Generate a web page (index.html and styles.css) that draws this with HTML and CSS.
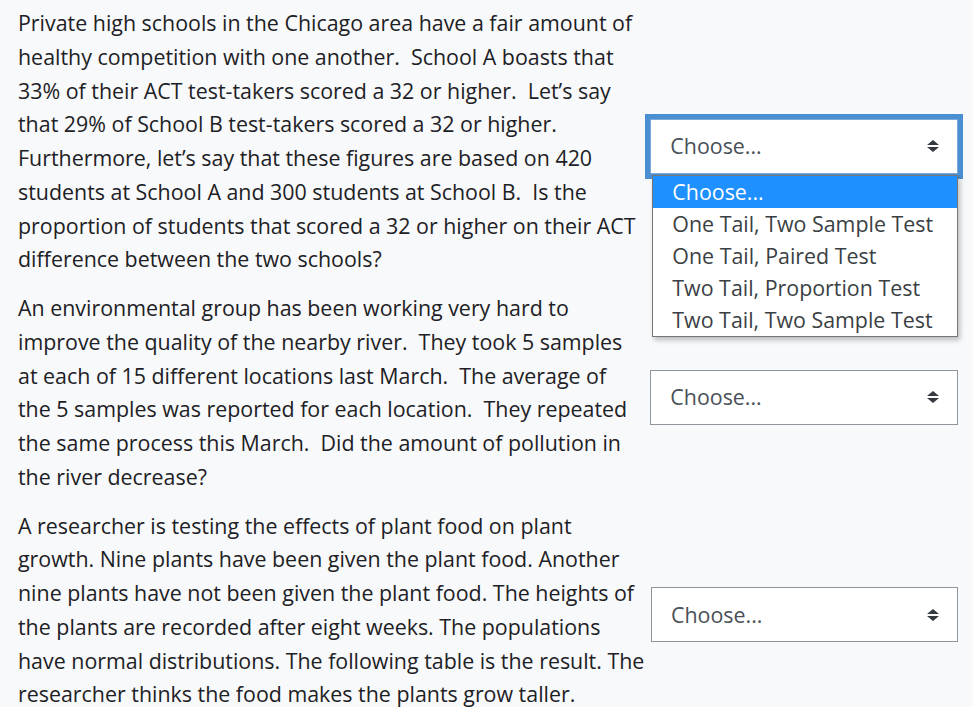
FILE: index.html
```html
<!DOCTYPE html>
<html lang="en">
<head>
<meta charset="utf-8">
<title>Matching question</title>
<link rel="stylesheet" href="styles.css">
</head>
<body>
<div class="content">
  <div class="question">
    <p class="qtext">Private high schools in the Chicago area have a fair amount of<br>healthy competition with one another.&nbsp; School A boasts that<br>33% of their ACT test-takers scored a 32 or higher.&nbsp; Let’s say<br>that 29% of School B test-takers scored a 32 or higher.&nbsp;<br>Furthermore, let’s say that these figures are based on 420<br>students at School A and 300 students at School B.&nbsp; Is the<br>proportion of students that scored a 32 or higher on their ACT<br>difference between the two schools?</p>
    <div class="select-wrap">
      <div class="select focused">
        <span class="select-label">Choose...</span>
        <svg class="arrows" width="12" height="12" viewBox="0 0 12 12"><path d="M0 5 L6 0 L12 5 Z M0 7 L12 7 L6 12 Z" fill="#343a40"/></svg>
      </div>
      <ul class="menu">
        <li class="option active">Choose...</li>
        <li class="option">One Tail, Two Sample Test</li>
        <li class="option">One Tail, Paired Test</li>
        <li class="option">Two Tail, Proportion Test</li>
        <li class="option">Two Tail, Two Sample Test</li>
      </ul>
    </div>
  </div>
  <div class="question">
    <p class="qtext">An environmental group has been working very hard to<br>improve the quality of the nearby river.&nbsp; They took 5 samples<br>at each of 15 different locations last March.&nbsp; The average of<br>the 5 samples was reported for each location.&nbsp; They repeated<br>the same process this March.&nbsp; Did the amount of pollution in<br>the river decrease?</p>
    <div class="select-wrap">
      <div class="select">
        <span class="select-label">Choose...</span>
        <svg class="arrows" width="12" height="12" viewBox="0 0 12 12"><path d="M0 5 L6 0 L12 5 Z M0 7 L12 7 L6 12 Z" fill="#343a40"/></svg>
      </div>
    </div>
  </div>
  <div class="question">
    <p class="qtext">A researcher is testing the effects of plant food on plant<br>growth. Nine plants have been given the plant food. Another<br>nine plants have not been given the plant food. The heights of<br>the plants are recorded after eight weeks. The populations<br>have normal distributions. The following table is the result. The<br>researcher thinks the food makes the plants grow taller.</p>
    <div class="select-wrap">
      <div class="select">
        <span class="select-label">Choose...</span>
        <svg class="arrows" width="12" height="12" viewBox="0 0 12 12"><path d="M0 5 L6 0 L12 5 Z M0 7 L12 7 L6 12 Z" fill="#343a40"/></svg>
      </div>
    </div>
  </div>
</div>
</body>
</html>
```
FILE: styles.css
```css
html, body {
  margin: 0;
  padding: 0;
  background: #f8f9fa;
}
body {
  font-family: "Open Sans", "Noto Sans", "Liberation Sans", sans-serif;
  font-size: 21.4px;
  line-height: 33.75px;
  color: #1d2125;
  overflow: hidden;
}
.content {
  padding: 6px 15px 0 18px;
  display: flex;
  flex-direction: column;
  gap: 5px;
}
.question {
  display: flex;
  align-items: center;
  gap: 11px;
}
.qtext {
  margin: 0;
  padding-bottom: 10px;
  width: 622px;
  white-space: nowrap;
}
.select-wrap {
  position: relative;
  width: 308px;
}
.select {
  box-sizing: border-box;
  height: 55px;
  border: 1px solid #8f959e;
  background: #fff;
  display: flex;
  align-items: center;
  justify-content: space-between;
  padding: 0 18px 0 19px;
  color: #495057;
}
.select.focused {
  border-color: #7fa9d9;
  box-shadow: 0 0 0 5px #4b8fd3;
}
.arrows {
  display: block;
}
.menu {
  position: absolute;
  top: 56px;
  left: 2px;
  width: 306px;
  box-sizing: border-box;
  margin: 0;
  padding: 0;
  list-style: none;
  background: #fff;
  border: 1px solid #767676;
  box-shadow: 2px 3px 5px rgba(0, 0, 0, 0.25);
  z-index: 2;
}
.option {
  height: 32px;
  line-height: 32px;
  padding-left: 19px;
  color: #3a3f44;
}
.option.active {
  background: #1e90ff;
  color: #fff;
}
```
